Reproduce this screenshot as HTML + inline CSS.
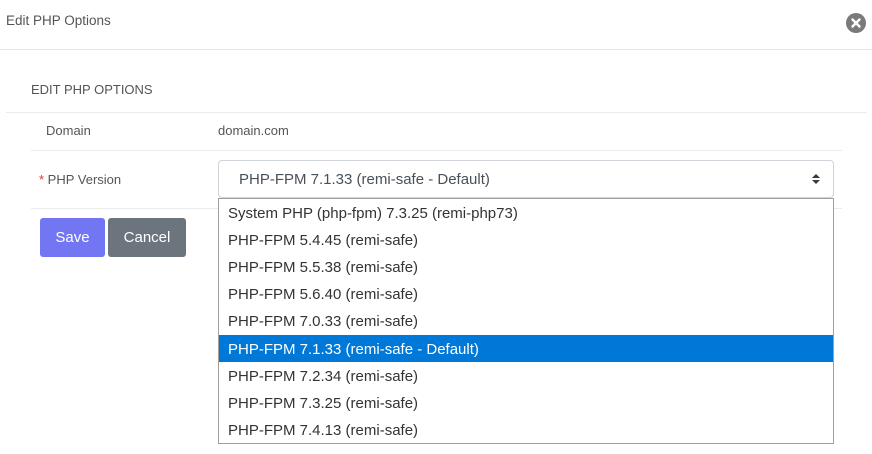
<!DOCTYPE html>
<html><head><style>
body{margin:0;width:872px;height:454px;background:#fff;font-family:"Liberation Sans",Arial,sans-serif;position:relative;overflow:hidden}
.a{position:absolute;white-space:nowrap}
.hl{position:absolute;height:1px;background:#e9ecef}
.it{position:absolute;left:0;width:614px;height:27px;line-height:29px;padding-left:9px;box-sizing:border-box;font-size:15px;color:#333}
</style></head><body>
<div class="a" style="left:6px;top:13px;font-size:13.5px;color:#555">Edit PHP Options</div>
<div class="a" style="left:846px;top:13px;width:20px;height:20px;border-radius:50%;background:#7a7a7a">
<svg width="20" height="20" viewBox="0 0 20 20"><path d="M6.5 6.5L13.5 13.5M13.5 6.5L6.5 13.5" stroke="#fff" stroke-width="2.4" stroke-linecap="round"/></svg></div>
<div class="hl" style="left:0;top:49px;width:872px;background:#e3e3e3"></div>
<div class="a" style="left:31px;top:82px;font-size:13px;color:#555">EDIT PHP OPTIONS</div>
<div class="hl" style="left:6px;top:112px;width:861px"></div>
<div class="a" style="left:46px;top:123px;font-size:13px;color:#555">Domain</div>
<div class="a" style="left:218px;top:123px;font-size:13px;color:#555">domain.com</div>
<div class="hl" style="left:31px;top:150px;width:811px"></div>
<div class="a" style="left:39px;top:172px;font-size:13px;color:#555"><span style="color:#e3342f">*</span> PHP Version</div>
<div class="a" style="left:218px;top:160px;width:616px;height:38px;border:1px solid #ced4da;border-radius:4px;box-sizing:border-box"></div>
<div class="a" style="left:239px;top:171px;font-size:15px;color:#495057">PHP-FPM 7.1.33 (remi-safe - Default)</div>
<svg class="a" style="left:811px;top:173px" width="10" height="12" viewBox="0 0 10 12"><path d="M1 5L5 1L9 5Z M1 7L5 11L9 7Z" fill="#343a40"/></svg>
<div class="hl" style="left:31px;top:208px;width:811px"></div>
<div class="a" style="left:40px;top:218px;width:65px;height:39px;background:#7376f2;border-radius:3px;color:#fff;font-size:15px;line-height:39px;text-align:center">Save</div>
<div class="a" style="left:108px;top:218px;width:78px;height:39px;background:#6c757d;border-radius:3px;color:#fff;font-size:15px;line-height:39px;text-align:center">Cancel</div>
<div class="a" style="left:218px;top:198px;width:616px;height:246px;border:1px solid #a0a0a0;box-sizing:border-box;background:#fff">
<div class="it" style="top:0">System PHP (php-fpm) 7.3.25 (remi-php73)</div>
<div class="it" style="top:27px">PHP-FPM 5.4.45 (remi-safe)</div>
<div class="it" style="top:54px">PHP-FPM 5.5.38 (remi-safe)</div>
<div class="it" style="top:81px">PHP-FPM 5.6.40 (remi-safe)</div>
<div class="it" style="top:108px">PHP-FPM 7.0.33 (remi-safe)</div>
<div class="it" style="top:136px;background:#0078d7;color:#fff">PHP-FPM 7.1.33 (remi-safe - Default)</div>
<div class="it" style="top:163px">PHP-FPM 7.2.34 (remi-safe)</div>
<div class="it" style="top:190px">PHP-FPM 7.3.25 (remi-safe)</div>
<div class="it" style="top:217px">PHP-FPM 7.4.13 (remi-safe)</div>
</div>
</body></html>
